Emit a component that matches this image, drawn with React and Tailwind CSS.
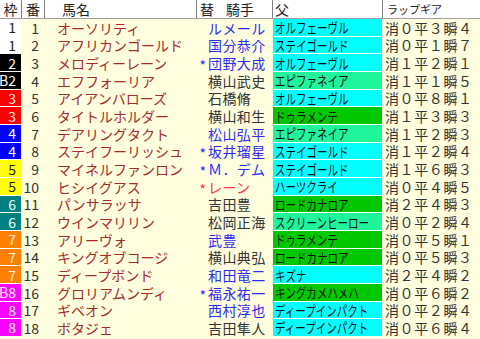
import React from "react";

const rows = [
  { w: "1", n: 1, h: "オーソリティ", j: "ルメール", jc: "b", s: false, f: "オルフェーヴル", fc: "c", r: "消０平３瞬４" },
  { w: "1", n: 2, h: "アフリカンゴールド", j: "国分恭介", jc: "b", s: false, f: "ステイゴールド", fc: "c", r: "消０平１瞬７" },
  { w: "2", n: 3, h: "メロディーレーン", j: "団野大成", jc: "b", s: true, f: "オルフェーヴル", fc: "c", r: "消１平２瞬１" },
  { w: "2", lbl: "B2", n: 4, h: "エフフォーリア", j: "横山武史", jc: "k", s: false, f: "エピファネイア", fc: "g", r: "消１平１瞬５" },
  { w: "3", n: 5, h: "アイアンバローズ", j: "石橋脩", jc: "k", s: false, f: "オルフェーヴル", fc: "c", r: "消０平８瞬１" },
  { w: "3", n: 6, h: "タイトルホルダー", j: "横山和生", jc: "k", s: false, f: "ドゥラメンテ", fc: "d", r: "消１平３瞬３" },
  { w: "4", n: 7, h: "デアリングタクト", j: "松山弘平", jc: "b", s: false, f: "エピファネイア", fc: "g", r: "消１平２瞬３" },
  { w: "4", n: 8, h: "ステイフーリッシュ", j: "坂井瑠星", jc: "b", s: true, f: "ステイゴールド", fc: "c", r: "消１平２瞬４" },
  { w: "5", n: 9, h: "マイネルファンロン", j: "Ｍ．デム", jc: "b", s: true, f: "ステイゴールド", fc: "c", r: "消１平６瞬３" },
  { w: "5", n: 10, h: "ヒシイグアス", j: "レーン", jc: "r", s: true, f: "ハーツクライ", fc: "c", r: "消０平４瞬５" },
  { w: "6", n: 11, h: "パンサラッサ", j: "吉田豊", jc: "k", s: false, f: "ロードカナロア", fc: "d", r: "消２平４瞬３" },
  { w: "6", n: 12, h: "ウインマリリン", j: "松岡正海", jc: "k", s: false, f: "スクリーンヒーロー", fc: "g", r: "消０平２瞬４" },
  { w: "7", n: 13, h: "アリーヴォ", j: "武豊", jc: "b", s: false, f: "ドゥラメンテ", fc: "d", r: "消０平５瞬１" },
  { w: "7", n: 14, h: "キングオブコージ", j: "横山典弘", jc: "k", s: false, f: "ロードカナロア", fc: "d", r: "消０平５瞬３" },
  { w: "7", n: 15, h: "ディープボンド", j: "和田竜二", jc: "b", s: false, f: "キズナ", fc: "c", r: "消２平４瞬２" },
  { w: "8", lbl: "B8", n: 16, h: "グロリアムンディ", j: "福永祐一", jc: "b", s: true, f: "キングカメハメハ", fc: "d", r: "消０平６瞬２" },
  { w: "8", n: 17, h: "ギベオン", j: "西村淳也", jc: "b", s: false, f: "ディープインパクト", fc: "c", r: "消０平２瞬４" },
  { w: "8", n: 18, h: "ボタジェ", j: "吉田隼人", jc: "k", s: false, f: "ディープインパクト", fc: "c", r: "消０平６瞬４" },
];

const wakuCls = {
  "1": "bg-white text-[#222]",
  "2": "bg-black text-white",
  "3": "bg-[#ff0000] text-[#ffe8e8]",
  "4": "bg-[#0000ff] text-white",
  "5": "bg-[#ffff00] text-[#222]",
  "6": "bg-[#008080] text-[#e8ffff]",
  "7": "bg-[#ff8000] text-[#fff0e0]",
  "8": "bg-[#ff00ff] text-[#ffe8ff]",
};

const fatherCls = {
  c: "bg-[#00ffff]",
  g: "bg-[#1ff59b]",
  d: "bg-[#00c800]",
};

const jockeyCls = {
  b: "text-[#2b2bf0]",
  k: "text-[#333]",
  r: "text-[#ff3355]",
};

function Row({ r }) {
  return (
    <div className="flex h-[17.67px] text-[14px] leading-[16px]">
      <div
        className={`w-[21px] mr-[1px] flex-none flex items-center justify-end pr-[5px] border-b border-white ${wakuCls[r.w]}`}
      >
        {r.lbl || r.w}
      </div>
      <div className="w-[25px] flex-none flex items-center justify-end pr-[8px] text-[#333]">
        {r.n}
      </div>
      <div className="w-[150px] flex-none flex items-center pl-[10px] text-[#a52a2a] whitespace-nowrap">
        {r.h}
      </div>
      <div className={`w-[76px] flex-none flex items-center whitespace-nowrap ${jockeyCls[r.jc]}`}>
        <span className="w-[11px] flex-none text-right pr-[2px] translate-y-[2px]">
          {r.s ? "*" : ""}
        </span>
        <span className="tracking-[0.4px]">{r.j}</span>
      </div>
      <div className="w-[110px] flex-none pr-[1px]">
        <div
          className={`h-full flex items-center pl-[2px] border-b border-white whitespace-nowrap text-[#111] ${fatherCls[r.fc]}`}
        >
          <span className="inline-block w-[80px] scale-x-75 origin-left">{r.f}</span>
        </div>
      </div>
      <div className="flex-1 flex items-center pl-[2px] text-[#333] tracking-[0.6px] whitespace-nowrap">
        {r.r}
      </div>
    </div>
  );
}

export default function App() {
  return (
    <div className="w-[480px] h-[339px] overflow-hidden bg-[#ffffe0] font-['Noto_Sans_CJK_JP',sans-serif]">
      <div className="flex h-[19px] bg-white border-b border-[#a0a0a0] text-[14px] leading-[18px] text-[#222]">
        <div className="w-[22px] flex-none text-center border-r border-[#808080]">枠</div>
        <div className="w-[23px] flex-none text-center border-r border-[#808080]">番</div>
        <div className="w-[152px] flex-none pl-[17px] border-r border-[#808080]">馬名</div>
        <div className="w-[76px] flex-none pl-[3px] border-r border-[#808080] whitespace-nowrap">
          替<span className="ml-[12px]">騎手</span>
        </div>
        <div className="w-[110px] flex-none pl-[2px] border-r border-[#808080]">父</div>
        <div className="flex-1 pl-[4px] text-[11px] whitespace-nowrap">ラップギア</div>
      </div>
      {rows.map((r) => (
        <Row key={r.n} r={r} />
      ))}
    </div>
  );
}
